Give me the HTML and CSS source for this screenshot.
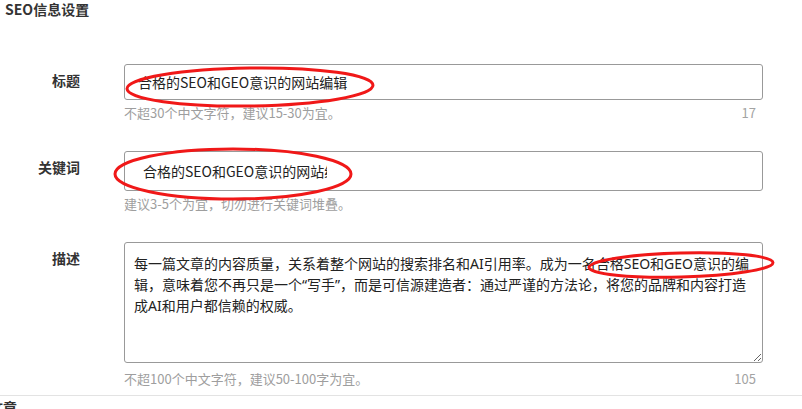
FILE: index.html
```html
<!DOCTYPE html>
<html lang="zh-CN">
<head>
    <meta charset="UTF-8">
    <meta name="viewport" content="width=device-width, initial-scale=1.0">
    <title>SEO信息设置</title>
    <link rel="stylesheet" href="styles.css">
</head>
<body>
    <div class="page">
        <h2 class="section-title">SEO信息设置</h2>

        <div class="form">
            <!-- 标题 -->
            <div class="row">
                <label class="label">标题</label>
                <div class="field">
                    <div class="input"><span class="value">合格的SEO和GEO意识的网站编辑</span></div>
                    <div class="help">
                        <span>不超30个中文字符，建议15-30为宜。</span>
                        <span class="count">17</span>
                    </div>
                </div>
            </div>

            <!-- 关键词 -->
            <div class="row">
                <label class="label">关键词</label>
                <div class="field">
                    <div class="input input-tall"><span class="value value-clip">合格的SEO和GEO意识的网站编辑</span></div>
                    <div class="help">
                        <span>建议3-5个为宜，切勿进行关键词堆叠。</span>
                    </div>
                </div>
            </div>

            <!-- 描述 -->
            <div class="row">
                <label class="label">描述</label>
                <div class="field">
                    <textarea class="textarea" wrap="off">每一篇文章的内容质量，关系着整个网站的搜索排名和AI引用率。成为一名合格SEO和GEO意识的编
辑，意味着您不再只是一个“写手”，而是可信源建造者：通过严谨的方法论，将您的品牌和内容打造
成AI和用户都信赖的权威。</textarea>
                    <div class="help help-wide">
                        <span>不超100个中文字符，建议50-100字为宜。</span>
                        <span class="count">105</span>
                    </div>
                </div>
            </div>
        </div>

        <div class="divider"></div>
        <h2 class="next-title">文章</h2>
    </div>

    <!-- 红色标注 -->
    <svg class="marks" width="802" height="409" viewBox="0 0 802 409">
        <ellipse cx="250" cy="87" rx="123" ry="19" transform="rotate(-0.8 250 87)"/>
        <ellipse cx="233" cy="174" rx="118" ry="25"/>
        <ellipse cx="681" cy="265" rx="92" ry="12" transform="rotate(-1.5 681 265)"/>
    </svg>
</body>
</html>
```

FILE: styles.css
```css
html, body {
    margin: 0;
    padding: 0;
    height: 100%;
    overflow: hidden;
}

body {
    font-family: "Noto Sans CJK SC", "Noto Sans", sans-serif;
    font-size: 14px;
    color: #333;
    background: #fff;
    position: relative;
}

.section-title {
    margin: 0;
    padding-left: 5px;
    font-size: 14px;
    line-height: 18px;
    font-weight: 600;
    color: #333;
}

.form {
    margin-top: 46px;
    display: flex;
    flex-direction: column;
    gap: 30px;
}

.row {
    display: grid;
    grid-template-columns: 80px 639px;
    column-gap: 44px;
    align-items: start;
}

.label {
    text-align: right;
    padding-top: 6px;
    line-height: 20px;
    font-weight: 600;
    color: #333;
}

.input {
    box-sizing: border-box;
    height: 36px;
    border: 1px solid #999;
    border-radius: 3px;
    padding: 0 13px;
    display: flex;
    align-items: center;
    color: #222;
    white-space: nowrap;
}

.input-tall {
    height: 40px;
    padding-left: 18px;
}

.value-clip {
    display: inline-block;
    width: 184px;
    overflow: hidden;
}

.textarea {
    display: block;
    box-sizing: border-box;
    width: 100%;
    height: 121px;
    margin: 0;
    padding: 10px 9px;
    border: 1px solid #999;
    border-radius: 3px;
    font-family: "Noto Sans", "Noto Sans CJK SC", sans-serif;
    font-size: 14px;
    line-height: 21px;
    color: #222;
    white-space: pre;
    overflow: hidden;
    resize: vertical;
}

.help {
    display: flex;
    justify-content: space-between;
    margin-top: 5px;
    padding-right: 7px;
    font-size: 13px;
    line-height: 16px;
    color: #9e9e9e;
}

.help-wide {
    margin-top: 8px;
}

.count {
    color: #a3a3a3;
}

.divider {
    margin-top: 8px;
    border-top: 1px solid #e3e3e3;
}

.next-title {
    margin: 2px 0 0 -11px;
    font-size: 14px;
    line-height: 18px;
    font-weight: 600;
    color: #333;
}

.marks {
    position: absolute;
    top: 0;
    left: 0;
    pointer-events: none;
}

.marks ellipse {
    fill: none;
    stroke: #f01818;
    stroke-width: 3;
}
```
